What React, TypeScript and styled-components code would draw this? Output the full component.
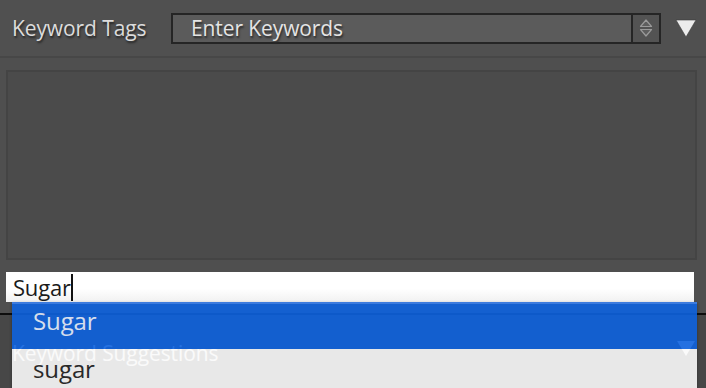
import React from "react";
import styled, { createGlobalStyle } from "styled-components";

const Global = createGlobalStyle`
  html, body { margin: 0; padding: 0; background: #505050; overflow: hidden; }
  * { box-sizing: border-box; }
`;

const FONT = `"Open Sans", "Noto Sans", sans-serif`;

const Page = styled.div`
  position: relative;
  width: 706px;
  height: 388px;
  overflow: hidden;
  background: #505050;
  font-family: ${FONT};
  display: flex;
  flex-direction: column;
`;

const Header = styled.div`
  height: 56px;
  display: flex;
  align-items: center;
  padding: 0 0 0 12px;
`;

const Label = styled.div`
  width: 159px;
  font-size: 21px;
  color: #dcdcdc;
  text-shadow: 1px 2px 2px #262626;
  letter-spacing: -0.1px;
`;

const Select = styled.div`
  width: 490px;
  height: 31px;
  border: 2px solid #252525;
  background: #5b5b5b;
  display: flex;
  align-items: stretch;
`;

const SelectText = styled.div`
  flex: 1;
  padding-left: 18px;
  font-size: 21px;
  line-height: 27px;
  color: #e4e4e4;
  text-shadow: 1px 2px 2px #2a2a2a;
  letter-spacing: -0.1px;
`;

const Spinner = styled.div`
  width: 28px;
  border-left: 2px solid #252525;
  background: #535353;
  display: flex;
  align-items: center;
  justify-content: center;
`;

const Caret = styled.div`
  margin-left: 14px;
  display: flex;
  align-items: center;
`;

const Divider = styled.div<{ $color: string; $h: number }>`
  height: ${(p) => p.$h}px;
  background: ${(p) => p.$color};
  flex-shrink: 0;
`;

const Body = styled.div`
  display: flex;
  flex-direction: column;
  padding: 12px 0 0 6px;
  background: #4f4f4f;
`;

const TextBox = styled.div`
  width: 691px;
  height: 190px;
  border: 2px solid #444444;
  background: #4b4b4b;
`;

const Input = styled.div`
  margin-top: 12px;
  width: 688px;
  height: 30px;
  background: linear-gradient(#ffffff 55%, #f1f1f1);
  display: flex;
  align-items: center;
  padding-left: 7px;
  font-size: 22px;
  color: #1a1a1a;
  letter-spacing: -0.2px;
`;

const TextCaret = styled.span`
  display: inline-block;
  width: 2px;
  height: 27px;
  background: #111;
`;

const Lower = styled.div`
  flex: 1;
  display: flex;
  flex-direction: column;
`;

const Spacer = styled.div`
  height: 11px;
  background: #4f4f4f;
`;

const SuggestHeader = styled.div`
  flex: 1;
  background: #474747;
  display: flex;
  align-items: flex-start;
  padding: 24px 10px 0 12px;
  justify-content: space-between;
`;

const SuggestLabel = styled.div`
  font-size: 21px;
  color: #ffffff;
  letter-spacing: -0.1px;
`;

const Dropdown = styled.div`
  position: absolute;
  left: 12px;
  top: 302px;
  width: 685px;
  opacity: 0.9;
  font-family: ${FONT};
  box-shadow: 0 1px 3px rgba(0, 0, 0, 0.3);
`;

const Option = styled.div<{ $active?: boolean }>`
  height: ${(p) => (p.$active ? 47 : 44)}px;
  padding: ${(p) => (p.$active ? 0 : 3)}px 0 0 21px;
  line-height: 34px;
  font-size: 24px;
  letter-spacing: -0.1px;
  background: ${(p) => (p.$active ? "#0e62de" : "#fafafa")};
  color: ${(p) => (p.$active ? "#e6efff" : "#262626")};
  border-top: ${(p) => (p.$active ? "2px solid #3a80ee" : "none")};
`;

export default function App() {
  return (
    <>
      <Global />
      <Page>
        <Header>
          <Label>Keyword Tags</Label>
          <Select>
            <SelectText>Enter Keywords</SelectText>
            <Spinner>
              <svg width="14" height="20" viewBox="0 0 14 20">
                <path d="M7 2 L12.5 8.5 H1.5 Z" fill="#5e5e5e" stroke="#9a9a9a" strokeWidth="1.2" strokeLinejoin="round" />
                <path d="M7 18 L12.5 11.5 H1.5 Z" fill="#5e5e5e" stroke="#9a9a9a" strokeWidth="1.2" strokeLinejoin="round" />
              </svg>
            </Spinner>
          </Select>
          <Caret>
            <svg width="22" height="20" viewBox="0 0 22 20">
              <path d="M1 2 H21 L11 19 Z" fill="#ececec" stroke="#3a3a3a" strokeWidth="0.6" strokeLinejoin="round" />
            </svg>
          </Caret>
        </Header>
        <Divider $color="#474747" $h={2} />
        <Body>
          <TextBox />
          <Input>
            Sugar<TextCaret />
          </Input>
        </Body>
        <Lower>
          <Spacer />
          <Divider $color="#0d0d0d" $h={2} />
          <SuggestHeader>
            <SuggestLabel>Keyword Suggestions</SuggestLabel>
            <svg width="20" height="18" viewBox="0 0 20 18">
              <path d="M1 2 H19 L10 17 Z" fill="#ffffff" />
            </svg>
          </SuggestHeader>
        </Lower>
        <Dropdown>
          <Option $active>Sugar</Option>
          <Option>sugar</Option>
        </Dropdown>
      </Page>
    </>
  );
}
